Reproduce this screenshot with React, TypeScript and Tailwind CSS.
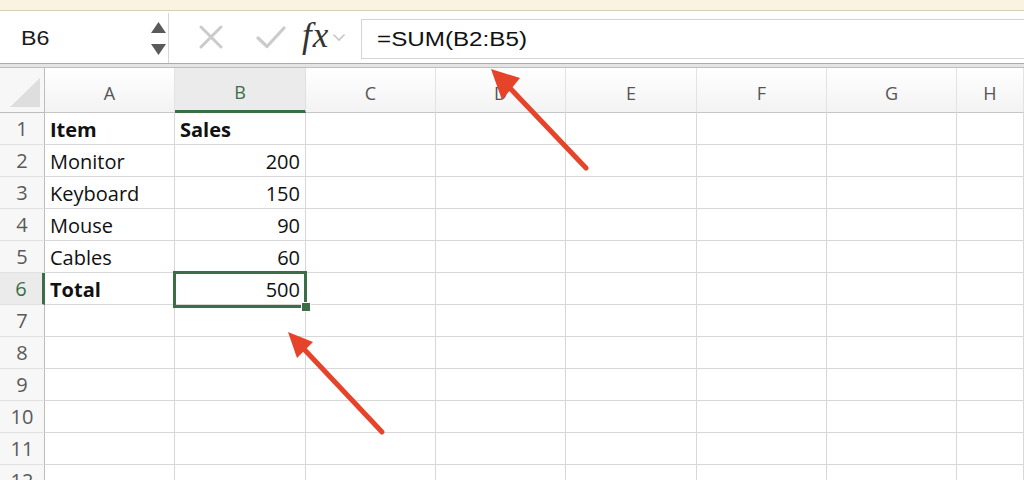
import React from 'react'

const GREEN = 'border-[#3b6e47]'

const cols = ['A', 'B', 'C', 'D', 'E', 'F', 'G', 'H']
const widths = ['w-[130px]', 'w-[131px]', 'w-[130px]', 'w-[130px]', 'w-[131px]', 'w-[130px]', 'w-[130px]', 'flex-1']

type Cell = { text: string; bold?: boolean; right?: boolean }

const data: Record<number, Cell[]> = {
  1: [{ text: 'Item', bold: true }, { text: 'Sales', bold: true }],
  2: [{ text: 'Monitor' }, { text: '200', right: true }],
  3: [{ text: 'Keyboard' }, { text: '150', right: true }],
  4: [{ text: 'Mouse' }, { text: '90', right: true }],
  5: [{ text: 'Cables' }, { text: '60', right: true }],
  6: [{ text: 'Total', bold: true }, { text: '500', right: true }],
}

const rows = Array.from({ length: 12 }, (_, i) => i + 1)

const Toolbar = () => (
  <div className="flex h-[52px] bg-white">
    {/* Name box */}
    <div className="ml-[2px] mt-[2px] flex h-[50px] w-[167px] items-center border-r border-[#d6d6d6] bg-white pl-[19px] pr-[2px]">
      <span className="inline-block origin-left scale-x-[1.16] font-['Liberation_Sans',sans-serif] text-[20px] text-[#1a1a1a]">
        B6
      </span>
      <div className="ml-auto flex flex-col gap-[11px]">
        <svg width="15" height="11" viewBox="0 0 15 11">
          <polygon points="7.5,0 15,11 0,11" fill="#5a5a5a" />
        </svg>
        <svg width="15" height="11" viewBox="0 0 15 11">
          <polygon points="0,0 15,0 7.5,11" fill="#5a5a5a" />
        </svg>
      </div>
    </div>

    {/* Cancel / enter / fx */}
    <div className="flex w-[192px] items-center">
      <svg width="24" height="24" viewBox="0 0 24 24" className="ml-[30px]">
        <path d="M2 2 L22 22 M22 2 L2 22" stroke="#cbcbcb" strokeWidth="3" strokeLinecap="round" />
      </svg>
      <svg width="30" height="24" viewBox="0 0 30 24" className="ml-[33px]">
        <path d="M2 13 L11 21.5 L28 3" stroke="#cbcbcb" strokeWidth="3.2" fill="none" strokeLinecap="round" strokeLinejoin="round" />
      </svg>
      <span className="ml-[16px] -mt-[3px] font-['Liberation_Serif',serif] text-[35px] italic leading-none tracking-[1px] text-[#333]">
        fx
      </span>
      <svg width="14" height="9" viewBox="0 0 14 9" className="ml-[3px]">
        <path d="M1.5 1.5 L7 7 L12.5 1.5" stroke="#c6c6c6" strokeWidth="1.6" fill="none" />
      </svg>
    </div>

    {/* Formula input */}
    <div className="mt-[8px] flex h-[40px] flex-1 items-center border border-r-0 border-[#d4d4d4] pl-[15px]">
      <span className="inline-block origin-left scale-x-[1.21] font-['Liberation_Sans',sans-serif] text-[20px] text-[#111]">
        =SUM(B2:B5)
      </span>
    </div>
  </div>
)

const ColumnHeader = () => (
  <div className="flex h-[45px]">
    <div className="relative w-[45px] border-r border-b border-[#bdbdbd] bg-[#f7f7f7]">
      <svg width="44" height="44" viewBox="0 0 44 44" className="absolute left-0 top-0">
        <polygon points="10,39 40,10 40,39" fill="#dedede" />
      </svg>
    </div>
    {cols.map((c, i) => {
      const active = c === 'B'
      return (
        <div
          key={c}
          className={`${widths[i]} flex items-center justify-center border-r pt-[7px] text-[18px] ${
            active
              ? `border-b-[3px] ${GREEN} bg-[#ebebeb] text-[#3b6e47] border-r-[#e0e0e0]`
              : 'border-b border-b-[#c6c6c6] border-r-[#e3e3e3] bg-gradient-to-b from-white to-[#f3f3f3] text-[#555]'
          }`}
        >
          {c}
        </div>
      )
    })}
  </div>
)

const Row = ({ n }: { n: number }) => {
  const cells = data[n] ?? []
  const active = n === 6
  return (
    <div className="flex h-[32px]">
      <div
        className={`flex w-[45px] items-center justify-center border-b border-b-[#e2e2e2] pt-[1px] text-[20px] ${
          active
            ? `border-r-[3px] ${GREEN} bg-[#ebebeb] text-[#3b6e47]`
            : 'border-r border-r-[#bdbdbd] bg-[#f7f7f7] text-[#5a5a5a]'
        }`}
      >
        {n}
      </div>
      {cols.map((c, i) => {
        const cell = cells[i]
        const selected = active && c === 'B'
        return (
          <div
            key={c}
            className={`${widths[i]} relative flex items-center border-r border-b border-[#d8d8d8] px-[5px] pt-[2px] text-[20px] text-[#111] ${
              cell?.right ? 'justify-end' : ''
            } ${cell?.bold ? 'font-bold' : ''}`}
          >
            {cell?.text}
            {selected && (
              <>
                <div className="absolute -left-[2px] -right-[2px] -top-[2px] -bottom-[4px] z-10 border-[3px] border-solid border-[#3b6e47]" />
                <div className="absolute -bottom-[8px] -right-[6px] z-20 h-[10px] w-[10px] border border-solid border-white bg-[#3b6e47]" />
              </>
            )}
          </div>
        )
      })}
    </div>
  )
}

export default function App() {
  return (
    <div className="relative h-[480px] w-[1024px] overflow-hidden bg-white font-['Open_Sans',sans-serif]">
      <div className="h-[11px] border-b border-[#d6cdb9] bg-[#fbf3e2]" />
      <Toolbar />
      <div className="h-[5px] border-y border-t-[#ababab] border-b-[#bebebe] bg-[#e4e4e4]" />
      <ColumnHeader />
      {rows.map((n) => (
        <Row key={n} n={n} />
      ))}

      {/* Annotation arrows */}
      <svg width="1024" height="480" className="pointer-events-none absolute left-0 top-0 z-30">
        <line x1="586" y1="168" x2="508" y2="86" stroke="#e6432b" strokeWidth="5" strokeLinecap="round" />
        <polygon points="491,69 520,78 502,100" fill="#e6432b" />
        <line x1="382" y1="432" x2="302" y2="347" stroke="#e6432b" strokeWidth="5" strokeLinecap="round" />
        <polygon points="288,332 313,342 297,358" fill="#e6432b" />
      </svg>
    </div>
  )
}
